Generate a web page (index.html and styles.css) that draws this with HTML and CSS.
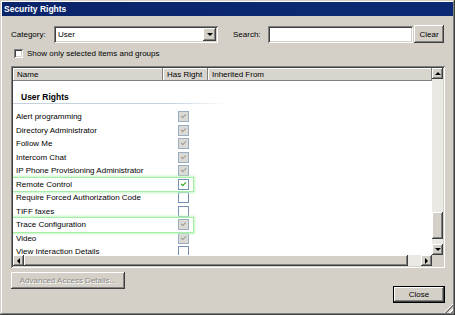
FILE: index.html
```html
<!DOCTYPE html>
<html lang="en">
<head>
    <meta charset="UTF-8">
    <title>Security Rights</title>
    <link rel="stylesheet" href="styles.css">
</head>
<body>
<div class="window">
    <div class="titlebar">Security Rights</div>

    <div class="content">
        <div class="toolbar">
            <label class="lbl lbl-cat">Category:</label>
            <div class="select">
                <span class="select-value">User</span>
                <span class="select-btn"><i class="arrow arrow-down"></i></span>
            </div>
            <label class="lbl lbl-search">Search:</label>
            <div class="field"></div>
            <button class="btn btn-clear">Clear</button>
        </div>

        <div class="filter">
            <span class="box3d"></span>
            <span>Show only selected items and groups</span>
        </div>

        <div class="list">
            <div class="view">
                <div class="header">
                    <div class="col col-name">Name</div>
                    <div class="col col-right">Has Right</div>
                    <div class="col col-from">Inherited From</div>
                </div>
                <div class="rows">
                    <div class="group">User Rights</div>
                    <div class="row"><span class="name">Alert programming</span><span class="chk chk-off-dis"></span></div>
                    <div class="row"><span class="name">Directory Administrator</span><span class="chk chk-dis"></span></div>
                    <div class="row"><span class="name">Follow Me</span><span class="chk chk-dis"></span></div>
                    <div class="row"><span class="name">Intercom Chat</span><span class="chk chk-dis"></span></div>
                    <div class="row"><span class="name">IP Phone Provisioning Administrator</span><span class="chk chk-dis"></span></div>
                    <div class="row hl"><span class="name">Remote Control</span><span class="chk chk-on"></span></div>
                    <div class="row"><span class="name">Require Forced Authorization Code</span><span class="chk"></span></div>
                    <div class="row"><span class="name">TIFF faxes</span><span class="chk"></span></div>
                    <div class="row hl"><span class="name">Trace Configuration</span><span class="chk chk-dis"></span></div>
                    <div class="row"><span class="name">Video</span><span class="chk chk-dis"></span></div>
                    <div class="row"><span class="name">View Interaction Details</span><span class="chk"></span></div>
                </div>
            </div>
            <div class="vscroll">
                <span class="sbtn"><i class="arrow arrow-up"></i></span>
                <span class="track"></span>
                <span class="thumb thumb-v"></span>
                <span class="track track-end"></span>
                <span class="sbtn"><i class="arrow arrow-down"></i></span>
            </div>
            <div class="hscroll">
                <span class="sbtn"><i class="arrow arrow-left"></i></span>
                <span class="thumb thumb-h"></span>
                <span class="track"></span>
                <span class="sbtn"><i class="arrow arrow-right"></i></span>
            </div>
            <div class="corner"></div>
        </div>

        <div class="actions">
            <button class="btn btn-adv" disabled>Advanced Access Details...</button>
            <button class="btn btn-close">Close</button>
        </div>
    </div>

    <div class="grip"></div>
</div>
</body>
</html>
```

FILE: styles.css
```css
html {
    height: 100%;
}

body {
    margin: 0;
    font-family: "Liberation Sans", Arial, sans-serif;
    font-size: 8px;
    color: #000;
}

.window {
    position: relative;
    width: 455px;
    height: 315px;
    box-sizing: border-box;
    padding: 2px;
    background-color: #d4d0c8;
    box-shadow: inset -1px -1px #404040, inset 1px 1px #d4d0c8, inset -2px -2px #808080, inset 2px 2px #fff;
}

.titlebar {
    height: 14px;
    line-height: 14px;
    padding-left: 2px;
    background: linear-gradient(to right, #0a246a, #0c2a74);
    color: #fff;
    font-weight: bold;
    font-size: 8.5px;
}

.content {
    padding: 9px 8px 0 9px;
}

/* sunken / raised edges */
.select,
.field {
    box-sizing: border-box;
    height: 17px;
    background-color: #fff;
    box-shadow: inset 1px 1px #808080, inset -1px -1px #fff, inset 2px 2px #404040, inset -2px -2px #d4d0c8;
}

.btn {
    box-sizing: border-box;
    height: 18px;
    padding: 0;
    border: none;
    background-color: #d4d0c8;
    font: inherit;
    color: #000;
    box-shadow: inset -1px -1px #404040, inset 1px 1px #fff, inset -2px -2px #808080, inset 2px 2px #d4d0c8;
}

.toolbar {
    display: flex;
    align-items: center;
    height: 18px;
}

.lbl {
    flex: 0 0 auto;
}

.lbl-cat {
    width: 43px;
}

.lbl-search {
    width: 35px;
    margin-left: 15px;
}

.select {
    display: flex;
    align-items: center;
    width: 164px;
    padding: 2px;
}

.select-value {
    flex: 1;
    padding-left: 2px;
}

.select-btn {
    display: flex;
    align-items: center;
    justify-content: center;
    width: 13px;
    height: 13px;
    background-color: #d4d0c8;
    box-shadow: inset -1px -1px #404040, inset 1px 1px #fff, inset -2px -2px #808080;
}

.field {
    width: 145px;
}

.btn-clear {
    width: 30px;
    margin-left: 1px;
}

.filter {
    display: flex;
    align-items: center;
    gap: 4px;
    height: 14px;
    margin-top: 3px;
    padding-left: 3px;
}

.box3d {
    width: 9px;
    height: 9px;
    background-color: #fff;
    box-shadow: inset 1px 1px #808080, inset -1px -1px #fff, inset 2px 2px #404040, inset -2px -2px #d4d0c8;
}

/* list */
.list {
    display: grid;
    grid-template-columns: 419px 11px;
    grid-template-rows: 187px 11px;
    width: 434px;
    height: 202px;
    box-sizing: border-box;
    margin-top: 6px;
    padding: 2px;
    background-color: #fff;
    box-shadow: inset 1px 1px #808080, inset -1px -1px #fff, inset 2px 2px #404040, inset -2px -2px #d4d0c8;
}

.view {
    overflow: hidden;
    background-color: #fff;
}

.header {
    display: flex;
    height: 13px;
    line-height: 13px;
    background-color: #d8d5cf;
}

.col {
    box-sizing: border-box;
    padding-left: 4px;
    box-shadow: inset -1px -1px #808080, inset 1px 1px #fff;
    white-space: nowrap;
}

.col-name {
    width: 150px;
}

.col-right {
    width: 45px;
}

.col-from {
    flex: 1;
}

.rows {
    height: 174px;
    overflow: hidden;
}

.group {
    box-sizing: border-box;
    width: 212px;
    height: 23px;
    padding: 10px 0 0 8px;
    line-height: 12px;
    font-weight: bold;
    font-size: 8.5px;
    margin-bottom: 6px;
    background: linear-gradient(to right, #c3d1df 75%, rgba(195, 209, 223, 0)) left bottom / 100% 1px no-repeat;
}

.row {
    display: flex;
    align-items: center;
    width: 180px;
    height: 13.5px;
    white-space: nowrap;
}

.row .name {
    flex: 0 0 165px;
    box-sizing: border-box;
    padding-left: 3px;
}

.row.hl {
    position: relative;
    z-index: 1;
    box-shadow: 0 0 0 1px #a6eea6, 0 0 2px 2px #c4f6c4;
    background-color: #fff;
}

.chk {
    position: relative;
    width: 11px;
    height: 11px;
    box-sizing: border-box;
    border: 1px solid #7391b5;
    background-color: #fff;
}

.chk-dis,
.chk-off-dis {
    border-color: #98acc2;
    background-color: #dcdad5;
}

.chk-dis::after,
.chk-off-dis::after,
.chk-on::after {
    content: "";
    position: absolute;
    left: 3px;
    top: 1px;
    width: 2px;
    height: 4px;
    border: solid #9c9c9c;
    border-width: 0 1.5px 1.5px 0;
    transform: rotate(45deg);
}

.chk-on::after {
    border-color: #21a121;
}

/* scrollbars */
.vscroll {
    display: flex;
    flex-direction: column;
}

.hscroll {
    display: flex;
}

.sbtn {
    display: flex;
    align-items: center;
    justify-content: center;
    flex: 0 0 11px;
    width: 11px;
    height: 11px;
    box-sizing: border-box;
    background-color: #d4d0c8;
    box-shadow: inset -1px -1px #404040, inset 1px 1px #fff, inset -2px -2px #808080;
}

.track {
    flex: 1;
    background-color: #ebe9e4;
}

.track-end {
    flex: 0 0 5px;
}

.thumb {
    background-color: #d4d0c8;
    box-shadow: inset -1px -1px #404040, inset 1px 1px #fff, inset -2px -2px #808080;
}

.thumb-v {
    flex: 0 0 27px;
}

.thumb-h {
    flex: 0 0 384px;
}

.corner {
    background-color: #d4d0c8;
}

.arrow {
    width: 0;
    height: 0;
    border: 3px solid transparent;
}

.arrow-up {
    border-top-width: 0;
    border-bottom: 3px solid #000;
}

.arrow-down {
    border-bottom-width: 0;
    border-top: 3px solid #000;
}

.arrow-left {
    border-left-width: 0;
    border-right: 3px solid #000;
}

.arrow-right {
    border-right-width: 0;
    border-left: 3px solid #000;
}

/* bottom buttons */
.actions {
    display: flex;
    justify-content: space-between;
    align-items: flex-start;
    margin-top: 4px;
}

.btn-adv {
    width: 114px;
    height: 17px;
    color: #8c8a86;
    text-shadow: 1px 1px #fff;
}

.btn-close {
    width: 52px;
    height: 17px;
    margin-top: 14px;
    box-shadow: inset 0 0 0 1px #000, inset -2px -2px #404040, inset 2px 2px #fff, inset -3px -3px #808080;
}

.grip {
    position: absolute;
    right: 2px;
    bottom: 2px;
    width: 12px;
    height: 12px;
    background: repeating-linear-gradient(135deg, #d4d0c8 0 1.5px, #fff 1.5px 2.5px, #808080 2.5px 4.2px);
    clip-path: polygon(100% 0, 100% 100%, 0 100%);
}
```
